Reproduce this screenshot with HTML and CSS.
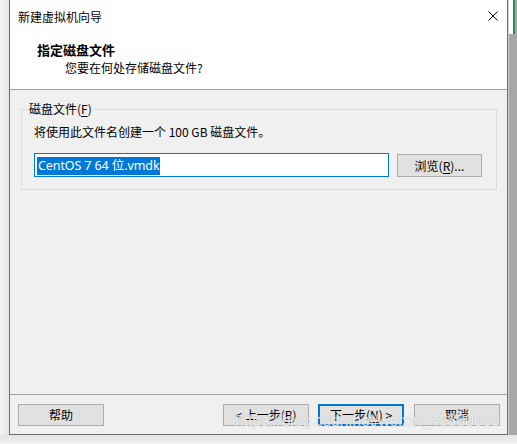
FILE: index.html
```html
<!DOCTYPE html>
<html lang="zh-CN">
<head>
<meta charset="utf-8">
<title>新建虚拟机向导</title>
<link rel="stylesheet" href="styles.css">
</head>
<body>
<div class="screen">
  <div class="gutter-left"></div>
  <div class="window">
    <div class="top">
      <div class="titlebar">
        <span class="title">新建虚拟机向导</span>
        <svg class="close" width="10" height="10" viewBox="0 0 10 10"><path d="M0.5 0.5 L9.5 9.5 M9.5 0.5 L0.5 9.5" stroke="#000" stroke-width="1" fill="none"/></svg>
      </div>
      <div class="header">
        <div class="heading">指定磁盘文件</div>
        <div class="subtitle">您要在何处存储磁盘文件?</div>
      </div>
    </div>
    <div class="body">
      <div class="group">
        <span class="legend">磁盘文件(<u>F</u>)</span>
        <div class="desc">将使用此文件名创建一个 100 GB 磁盘文件。</div>
        <div class="row">
          <div class="input"><span class="sel">CentOS 7 64 位.vmdk</span></div>
          <div class="btn browse">浏览(<u>R</u>)...</div>
        </div>
      </div>
    </div>
    <div class="footer">
      <div class="btn fbtn">帮助</div>
      <div class="spacer"></div>
      <div class="btn fbtn">&lt; 上一步(<u>B</u>)</div>
      <div class="btn fbtn primary">下一步(<u>N</u>) &gt;</div>
      <div class="btn fbtn cancel">取消</div>
    </div>
  </div>
  <div class="gutter-right">
    <div class="gr-top"></div>
    <div class="gr-mid"></div>
  </div>
  <div class="gutter-bottom"></div>
</div>
<div class="watermark">https://blog.csdn.net/weixin_43880055</div>
</body>
</html>
```
FILE: styles.css
```css
* { box-sizing: border-box; }
html, body { margin: 0; padding: 0; }
body {
  width: 517px;
  height: 444px;
  overflow: hidden;
  position: relative;
  background: #f2f2f2;
  font-family: "Noto Sans CJK SC", "Noto Sans", sans-serif;
  font-size: 12px;
  color: #000;
}
.screen {
  display: grid;
  grid-template-columns: 9px 499px 9px;
  grid-template-rows: 435px 9px;
}
.gutter-left {
  background: linear-gradient(to right, #f6f6f6, #e4e4e4);
}
.gutter-right {
  display: flex;
  flex-direction: column;
  background: #a7a7a7;
  border-left: 1px solid #cfcfcf;
}
.gr-top {
  height: 34px;
  background: #fff;
  border-right: 2px solid #2e8b57;
  margin-right: 2px;
}
.gr-mid { flex: 1; }
.gutter-bottom {
  grid-column: 1 / 4;
  background: linear-gradient(to bottom, #e2e2e2, #f4f4f4);
}
.window {
  display: flex;
  flex-direction: column;
  border-left: 1px solid #6e6e6e;
  border-right: 1px solid #6e6e6e;
  border-bottom: 1px solid #6e6e6e;
  background: #f0f0f0;
}
.top {
  background: #fff;
  height: 90px;
  border-bottom: 1px solid #a0a0a0;
}
.titlebar {
  height: 32px;
  display: flex;
  align-items: center;
  justify-content: space-between;
  padding: 2px 9px 0 8px;
}
.title { line-height: 18px; }
.close { display: block; margin-top: -2px; }
.header {
  padding: 9px 0 0 27px;
}
.heading {
  font-weight: bold;
  font-size: 13px;
  line-height: 18px;
}
.subtitle {
  padding-left: 28px;
  line-height: 18px;
}
.body {
  flex: 1;
  padding: 19px 10px 0 11px;
  border-bottom: 1px solid #a0a0a0;
}
.group {
  position: relative;
  border: 1px solid #dcdcdc;
  padding: 13px 14px 12px 12px;
}
.legend {
  position: absolute;
  top: -10px;
  left: 6px;
  padding: 0 1px;
  background: #f0f0f0;
  line-height: 18px;
}
.desc { line-height: 18px; }
.row {
  display: flex;
  gap: 8px;
  margin-top: 12px;
  align-items: flex-start;
}
.input {
  flex: 1;
  height: 24px;
  border: 1px solid #0078d7;
  background: #fff;
  padding: 2px 0 0 2px;
}
.sel {
  display: inline-block;
  background: #0078d7;
  color: #fff;
  height: 18px;
  line-height: 18px;
  padding: 0 1px;
  font-family: "Noto Sans", "Noto Sans CJK SC", sans-serif;
  font-size: 12.5px;
  letter-spacing: -0.1px;
}
.btn {
  background: #e1e1e1;
  border: 1px solid #adadad;
  display: flex;
  align-items: center;
  justify-content: center;
  line-height: 18px;
}
.browse {
  width: 85px;
  height: 23px;
  margin-top: 1px;
}
.footer {
  height: 39px;
  display: flex;
  align-items: flex-start;
  padding: 9px 7px 0 8px;
  gap: 9px;
}
.spacer { flex: 1; }
.fbtn {
  width: 86px;
  height: 22px;
}
.primary {
  border: 2px solid #0078d7;
}
.cancel { margin-left: 1px; }
u { text-underline-offset: 2px; }
.watermark {
  position: absolute;
  left: 235px;
  top: 411px;
  width: 272px;
  overflow: hidden;
  font-family: "Liberation Sans", sans-serif;
  font-size: 16px;
  letter-spacing: -0.2px;
  line-height: 20px;
  color: rgba(255, 255, 255, 0.75);
  text-shadow: 0 0 1px rgba(120, 120, 120, 0.5);
  white-space: nowrap;
}
```
